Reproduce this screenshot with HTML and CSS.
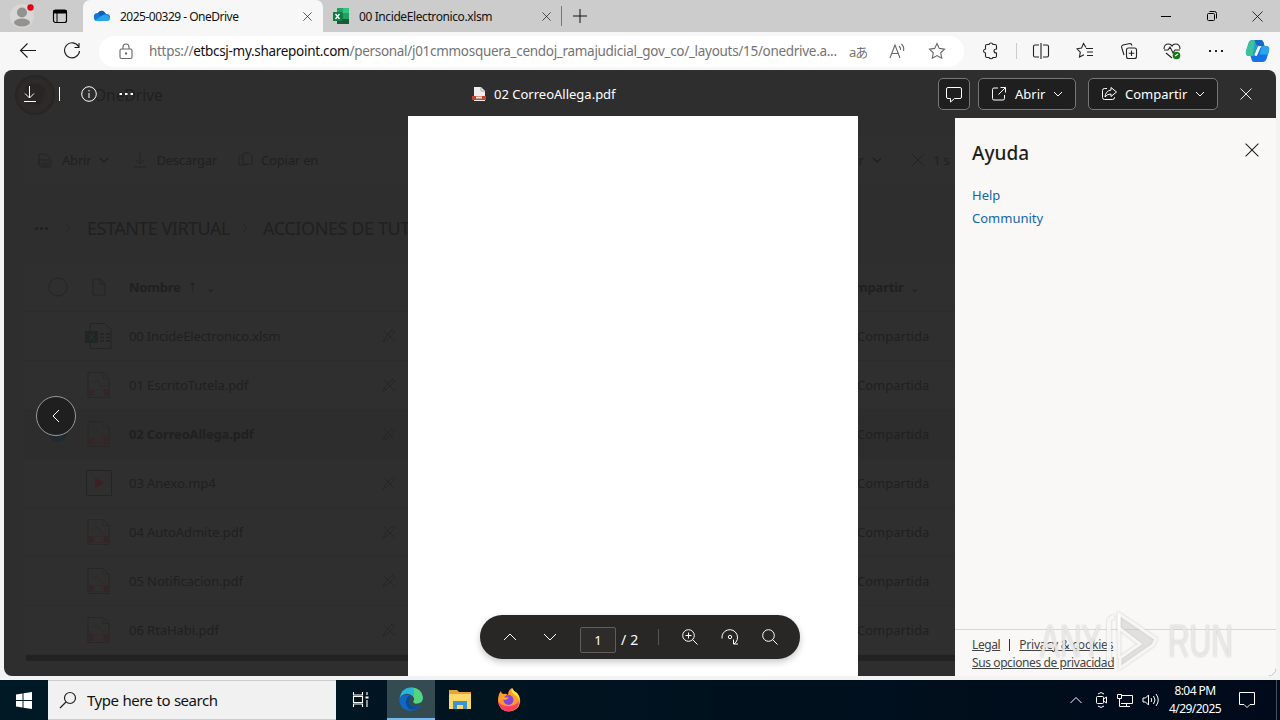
FILE: index.html
```html
<!DOCTYPE html>
<html lang="es">
<head>
    <meta charset="UTF-8">
    <meta name="viewport" content="width=device-width, initial-scale=1.0">
    <title>2025-00329 - OneDrive</title>
    <link rel="stylesheet" href="styles.css">
</head>
<body>

<!-- shared icons -->
<svg class="defs" width="0" height="0">
    <symbol id="i-pdf" viewBox="0 0 28 28">
        <path d="M3 1.500h15l6 6v19H3z" fill="none" stroke="#272727"/>
        <path d="M18 1.500v6h6M7 12q5-5 7 0t7 3" fill="none" stroke="#2d2828"/>
        <path d="M2 18h6v7H2zM19 18h6v7h-6z" fill="#322626" stroke="none"/>
        <path d="M9 18.500h9v6H9z" fill="none" stroke="#352828"/>
    </symbol>
    <symbol id="i-nopen" viewBox="0 0 16 16">
        <path d="M2 14l2-4 7-8 3 2-8 8zM2 2l12 12" fill="none" stroke="#262626"/>
    </symbol>
    <symbol id="i-down" viewBox="0 0 10 10">
        <path d="M1 3l4 4 4-4" fill="none" stroke="currentColor"/>
    </symbol>
    <symbol id="i-x" viewBox="0 0 12 12">
        <path d="M.5.5l11 11M11.500.5l-11 11" fill="none" stroke="currentColor" stroke-width=".9"/>
    </symbol>
</svg>

<div class="browser">
    <div class="tabs">
        <div class="tabs-left">
            <svg width="24" height="24" viewBox="0 0 24 24"><circle cx="12" cy="12" r="12" fill="#d9d7d6"/><circle cx="12" cy="8.500" r="5" fill="#949290"/><ellipse cx="12" cy="18.500" rx="8" ry="4" fill="#949290"/><circle cx="20.500" cy="3.500" r="3.200" fill="#e3000f"/></svg>
            <svg class="tab-actions" width="16" height="16" viewBox="0 0 16 16"><rect x="1.500" y="2" width="13" height="12.500" rx="2" fill="none" stroke="#000" stroke-width="1.200"/><path d="M1.500 2h13v3.500h-13z"/><path d="M5 5v9" stroke="#000"/></svg>
        </div>
        <div class="tab active">
            <svg width="18" height="16" viewBox="0 0 18 16"><path d="M1 10Q0 5 5 5q4-5 8 1 5 0 4 5-1 2-4 2H4q-3 0-3-3z" fill="#1479d0"/><path d="M5 5q4-5 8 1-3 0-5 3z" fill="#0a5fb8"/><path d="M2 12l8-5q4-2 7 3 0 3-4 3H4z" fill="#29a4ea"/></svg>
            <span class="t-one">2025-00329 - OneDrive</span>
            <svg class="x" width="9" height="9"><use href="#i-x"/></svg>
        </div>
        <div class="tab">
            <svg width="17" height="16" viewBox="0 0 17 16"><path d="M4 0h12v16H4z" fill="#21a366"/><path d="M10 0h6v5h-6z" fill="#33c481"/><path d="M4 5h6v6H4z" fill="#107c41"/><path d="M4 11h12v5H4z" fill="#185c37"/><path d="M0 4h9v9H0z" fill="#107c41"/><path d="M2.500 6l4 5M6.500 6l-4 5" stroke="#fff" stroke-width="1.300"/></svg>
            <span class="t-two">00 IncideElectronico.xlsm</span>
            <svg class="x" width="9" height="9"><use href="#i-x"/></svg>
        </div>
        <div class="tab-sep"></div>
        <svg class="new-tab" width="14" height="14" viewBox="0 0 14 14"><path d="M7 0v14M0 7h14" stroke="#111"/></svg>
        <div class="win-buttons">
            <svg width="12" height="12" viewBox="0 0 12 12"><path d="M1 6.500h10" stroke="#000"/></svg>
            <svg width="12" height="12" viewBox="0 0 12 12" fill="none" stroke="#000"><rect x="1.500" y="3.500" width="7" height="7" rx="1"/><path d="M3.500 1.500h5q2 0 2 2v5"/></svg>
            <svg width="11" height="11"><use href="#i-x"/></svg>
        </div>
    </div>

    <div class="toolbar">
        <svg class="back" width="18" height="16" viewBox="0 0 18 16" fill="none" stroke="#1b1b1b" stroke-width="1.100"><path d="M17 7.500H1.500M8.500.5l-7 7 7 7"/></svg>
        <svg class="reload" width="18" height="18" viewBox="0 0 18 18" fill="none" stroke="#1b1b1b" stroke-width="1.100"><path d="M15.500 4.500A7.500 7.500 0 1 0 16.500 9M16 1v4.500h-4.500"/></svg>
        <div class="address">
            <svg width="14" height="17" viewBox="0 0 14 17" fill="none" stroke="#666" stroke-width="1.100"><rect x="1" y="6" width="12" height="9.500" rx="1.500"/><path d="M4 6V4q0-3 3-3t3 3v2"/><circle cx="7" cy="10.500" r=".6" fill="#666"/></svg>
            <span class="url">https://<b>etbcsj-my.sharepoint.com</b>/personal/j01cmmosquera_cendoj_ramajudicial_gov_co/_layouts/15/onedrive.a...</span>
            <span class="translate">aあ</span>
            <svg class="read" width="18" height="16" viewBox="0 0 18 16" fill="none" stroke="#666" stroke-width="1.100"><path d="M1 15L6 2l5 13M3 10.500h6M10 3q2 2 1.500 4M12.500 1q3 3 2 7"/></svg>
            <svg width="18" height="18" viewBox="0 0 18 18" fill="none" stroke="#666" stroke-width="1.100"><path d="M9 1.500l2.300 4.900 5.200.7-3.800 3.700 1 5.400L9 13.600l-4.700 2.600 1-5.400-3.800-3.700 5.200-.7z"/></svg>
        </div>
        <div class="tools">
            <svg width="18" height="18" viewBox="0 0 18 18"><path d="M5 2.500h2q.5-1.500 2-1.500t2 1.500h2q1.500 0 1.500 1.500v3q-2.500 0-2.500 2t2.500 2v3q0 1.500-1.500 1.500h-2q-.5 1.300-2 1.300t-2-1.300H5q-1.500 0-1.500-1.500v-3Q1.500 10.500 1.500 9t2-2V4Q3.500 2.500 5 2.500z"/></svg>
            <i class="tool-sep"></i>
            <svg width="18" height="18" viewBox="0 0 18 18"><path d="M7 3H3Q1.500 3 1.500 4.500v9Q1.500 15 3 15h4M11 3h4q1.500 0 1.500 1.500v9q0 1.500-1.500 1.500h-4M9 1v16"/></svg>
            <svg width="18" height="18" viewBox="0 0 18 18"><path d="M10 6.500h7M11 10h6M11 13.500h6M10 5.500L7.500 1.500l-2 4.600-4.500.7 3.300 3.300-.8 4.900 4.500-2.300"/></svg>
            <svg width="18" height="18" viewBox="0 0 18 18"><rect x="6.500" y="6" width="10" height="10.500" rx="2"/><path d="M11.500 8.500v5.500M8.700 11.300h5.600M4 13l-2.500-8q0-1.500 1.500-2l7-1.500q1.500 0 2 2"/></svg>
            <svg width="18" height="18" viewBox="0 0 18 18"><path d="M1 7q0-5 4.500-5Q8 2 9 4q1-2 3.500-2Q17 2 17 7M3 11l6 5M1 8h4l2-3 3 6 2-3h5"/><circle cx="13.500" cy="13.500" r="3.800" fill="#107c10" stroke="none"/><path d="M12 14l3-2" stroke="#fff"/></svg>
            <svg width="18" height="18" viewBox="0 0 18 18"><path d="M2 9h2M8 9h2M14 9h2" stroke-width="2"/></svg>
        </div>
        <svg class="copilot" width="25" height="24" viewBox="0 0 25 24"><path d="M7 1h9q2 0 2.500 2.500l1 3.500h-4q-2.500 0-3.500 3l-2 7H4q-4 0-3-5l2.500-8Q4.500 1 7 1z" fill="#21a2c4"/><path d="M3.500 5Q5 1 10 1L7.500 17H4q-4 0-3-5z" fill="#3fc29c"/><path d="M9.500 1H16q2 0 2.500 2.500l1 3.500h-5l-3-1z" fill="#1568c7"/><path d="M18 7h3q4 0 3 5l-2.500 8q-1 3-4 3H9q-2 0-2.500-2.500l-1-3.500h4q2.500 0 3.500-3l2-5q.5-2 3-2z" fill="#1673e6"/><path d="M18 7h3q4 0 3 5l-1 3.500h-8.500l1.500-6q.5-2.500 2-2.500z" fill="#29a4ed"/><path d="M14.500 7.500l-4 9" stroke="#f7f7f7" stroke-width="2.600"/></svg>
    </div>

    <div class="content">
        <!-- OneDrive file list, dimmed behind the viewer -->
        <div class="onedrive">
            <div class="suite">
                <svg width="42" height="42" viewBox="0 0 42 42"><circle cx="21" cy="21" r="19" fill="#2c2a28" stroke="#272624" stroke-width="2"/><circle cx="21" cy="21" r="14" fill="none" stroke="#302b28" stroke-width="2"/><path d="M11 14q10-9 20 0l-3 14q-7 6-14 0z" fill="#272624" stroke="none"/></svg>
                <span>OneDrive</span>
            </div>
            <div class="commands">
                <svg width="16" height="16" viewBox="0 0 16 16"><path d="M2 12V2h7l4 4v2M2 8h12v5H2zM4 11h8M3 15h11"/></svg>
                <span class="c-open">Abrir</span>
                <svg class="chev" width="10" height="10"><use href="#i-down"/></svg>
                <svg class="c-dl" width="14" height="16" viewBox="0 0 14 16"><path d="M7 0v12M2.500 7.500L7 12l4.500-4.500M1 15h12"/></svg>
                <span class="c-download">Descargar</span>
                <svg class="c-cp" width="16" height="16" viewBox="0 0 16 16"><path d="M6 1h6l3 3v8H6zM6 4H2v9h8v-1"/></svg>
                <span class="c-copy">Copiar en</span>
                <span class="c-sort">Ordenar</span>
                <svg class="chev" width="10" height="10"><use href="#i-down"/></svg>
                <div class="selected"><svg width="12" height="12"><use href="#i-x"/></svg><span>1 s</span></div>
            </div>
            <div class="crumbs">
                <b class="dots">···</b>
                <svg width="8" height="10" viewBox="0 0 8 10"><path d="M2 1l4 4-4 4"/></svg>
                <span class="cr-one">ESTANTE VIRTUAL</span>
                <svg width="8" height="10" viewBox="0 0 8 10"><path d="M2 1l4 4-4 4"/></svg>
                <span class="cr-two">ACCIONES DE TUTELA</span>
            </div>
            <div class="files">
                <div class="file head">
                    <svg class="pick" width="20" height="20" viewBox="0 0 20 20"><circle cx="10" cy="10" r="9"/></svg>
                    <svg class="type" width="16" height="18" viewBox="0 0 16 18"><path d="M2 1h7l5 5v11H2zM9 1v5h5"/></svg>
                    <span class="name">Nombre &nbsp;<small>↑ &nbsp; ⌄</small></span>
                    <span></span>
                    <span class="share">Compartir &nbsp;<small>⌄</small></span>
                </div>
                <div class="file">
                    <span></span>
                    <svg class="type" width="28" height="28" viewBox="0 0 28 28"><path d="M5 1.500h15l6 6v19H5z"/><path d="M0 9h13v12H0z" fill="#1f2623" stroke="none"/><path d="M4 12l5 6M9 12l-5 6" stroke="#2b3430"/><path d="M15 12h4M21 12h4M15 15.500h4M21 15.500h4M15 19h4M21 19h4" stroke="#202422" stroke-width="1.500"/></svg>
                    <span class="name n0">00 IncideElectronico.xlsm</span>
                    <svg width="16" height="16"><use href="#i-nopen"/></svg>
                    <span class="share">Compartida</span>
                </div>
                <div class="file">
                    <span></span>
                    <svg class="type" width="28" height="28"><use href="#i-pdf"/></svg>
                    <span class="name">01 EscritoTutela.pdf</span>
                    <svg width="16" height="16"><use href="#i-nopen"/></svg>
                    <span class="share">Compartida</span>
                </div>
                <div class="file current">
                    <svg class="pick" width="20" height="20" viewBox="0 0 20 20"><circle cx="10" cy="9" r="9" fill="#1f2a31" stroke="none"/></svg>
                    <svg class="type" width="28" height="28"><use href="#i-pdf"/></svg>
                    <span class="name n2">02 CorreoAllega.pdf</span>
                    <svg width="16" height="16"><use href="#i-nopen"/></svg>
                    <span class="share">Compartida</span>
                </div>
                <div class="file">
                    <span></span>
                    <svg class="type" width="28" height="28" viewBox="0 0 28 28"><path d="M1.500 1.500h25v25h-25z"/><path d="M10 9l9 5-9 5z" fill="#3d1f24" stroke="none"/></svg>
                    <span class="name">03 Anexo.mp4</span>
                    <svg width="16" height="16"><use href="#i-nopen"/></svg>
                    <span class="share">Compartida</span>
                </div>
                <div class="file">
                    <span></span>
                    <svg class="type" width="28" height="28"><use href="#i-pdf"/></svg>
                    <span class="name">04 AutoAdmite.pdf</span>
                    <svg width="16" height="16"><use href="#i-nopen"/></svg>
                    <span class="share">Compartida</span>
                </div>
                <div class="file">
                    <span></span>
                    <svg class="type" width="28" height="28"><use href="#i-pdf"/></svg>
                    <span class="name">05 Notificacion.pdf</span>
                    <svg width="16" height="16"><use href="#i-nopen"/></svg>
                    <span class="share">Compartida</span>
                </div>
                <div class="file">
                    <span></span>
                    <svg class="type" width="28" height="28"><use href="#i-pdf"/></svg>
                    <span class="name">06 RtaHabi.pdf</span>
                    <svg width="16" height="16"><use href="#i-nopen"/></svg>
                    <span class="share">Compartida</span>
                </div>
            </div>
            <div class="scrollbar"></div>
        </div>

        <!-- file viewer -->
        <div class="viewer">
            <div class="viewer-bar">
                <div class="bar-left">
                    <svg width="16" height="18" viewBox="0 0 16 18"><path d="M7.500 1v12M3 8.500L7.500 13 12 8.500M2 16.500h12"/></svg>
                    <i class="bar-sep"></i>
                    <svg width="16" height="16" viewBox="0 0 16 16"><circle cx="8" cy="8" r="7.300"/><path d="M8 7v5M8 4v1.500"/></svg>
                    <svg class="more" width="16" height="16" viewBox="0 0 16 16"><path d="M1.500 8h2.500M7 8h2.500M12.500 8h2.500" stroke-width="2"/></svg>
                </div>
                <div class="bar-title">
                    <svg width="14" height="16" viewBox="0 0 14 16"><path d="M2 1h7l4 4v10H2z" fill="#f0eeee" stroke="none"/><path d="M9 1v4h4" stroke="#aaa"/><path d="M0 10h14v4H0z" fill="#c0442e" stroke="none"/><path d="M4 10.500h6v2H4z" fill="#eee" stroke="none"/></svg>
                    <span class="doc-name">02 CorreoAllega.pdf</span>
                </div>
                <div class="bar-right">
                    <div class="btn icon-only"><svg width="18" height="18" viewBox="0 0 18 18"><path d="M3 2.500h12q1.500 0 1.500 1.500v8q0 1.500-1.500 1.500h-5.500L5.500 17v-3.500H3Q1.500 13.500 1.500 12V4Q1.500 2.500 3 2.500z"/></svg></div>
                    <div class="btn b-open"><svg width="16" height="16" viewBox="0 0 16 16"><path d="M7 2H3Q1.500 2 1.500 3.500v9Q1.500 14 3 14h9q1.500 0 1.500-1.500V9M9.500 1.500h5v5M14.500 1.500l-7 7"/></svg><span>Abrir</span><svg class="chev" width="10" height="10"><use href="#i-down"/></svg></div>
                    <div class="btn b-share"><svg width="17" height="16" viewBox="0 0 17 16"><path d="M6 2.500H3.500q-2 0-2 2v7q0 2 2 2h8q2 0 2-2V11M10 1.500l5.500 4.500-5.500 4.500V8q-4 0-6 3 .5-6 6-7z"/></svg><span>Compartir</span><svg class="chev" width="10" height="10"><use href="#i-down"/></svg></div>
                    <svg class="close" width="12" height="12"><use href="#i-x"/></svg>
                </div>
            </div>
            <div class="viewer-body">
                <div class="stage">
                    <div class="prev"><svg width="8" height="14" viewBox="0 0 8 14"><path d="M7 1L1 7l6 6"/></svg></div>
                    <div class="page"></div>
                </div>
                <div class="help">
                    <div class="help-head"><h2>Ayuda</h2><svg width="14" height="14"><use href="#i-x"/></svg></div>
                    <div class="help-links"><a>Help</a><a class="community">Community</a></div>
                    <div class="legal">
                        <div><a>Legal</a><i></i><a class="cookies">Privacy &amp; cookies</a></div>
                        <div><a class="options">Sus opciones de privacidad</a></div>
                    </div>
                </div>
            </div>
        </div>

        <div class="pager">
            <svg width="14" height="14" viewBox="0 0 14 14"><path d="M1 10l6-6 6 6"/></svg>
            <svg width="14" height="14" viewBox="0 0 14 14"><path d="M1 4l6 6 6-6"/></svg>
            <span class="page-no">1</span>
            <span class="of">/ 2</span>
            <i></i>
            <svg width="18" height="18" viewBox="0 0 18 18"><circle cx="7.500" cy="7.500" r="5.800"/><path d="M11.500 11.500l5 5M7.500 4.500v6M4.500 7.500h6"/></svg>
            <svg width="20" height="20" viewBox="0 0 20 20"><path d="M2 11.500a7.800 7.800 0 1 1 12 5.500M13.500 12.500V17h4.500"/><circle cx="10" cy="10" r="1.700"/></svg>
            <svg width="18" height="18" viewBox="0 0 18 18"><circle cx="7.500" cy="7.500" r="5.800"/><path d="M11.500 11.500l5 5"/></svg>
        </div>

        <div class="watermark">
            <span>ANY</span>
            <svg width="56" height="64" viewBox="0 0 56 64"><path class="bars" d="M3 52V13q0-4 5-5"/><path d="M13 5l37 25-3 6-33 23V49l20-14-21-16z"/><path d="M13 5v44"/></svg>
            <span>RUN</span>
        </div>
    </div>

    <div class="taskbar">
        <div class="start"><svg width="16" height="17" viewBox="0 0 16 17"><path d="M0 2.500l6.500-1V8H0zM7.500 1.300L16 0v8H7.500zM0 9h6.500v6.500L0 14.600zM7.500 9H16v8l-8.500-1.300z" fill="#fff"/></svg></div>
        <div class="search">
            <svg width="18" height="18" viewBox="0 0 18 18" fill="none" stroke="#222" stroke-width="1.200"><circle cx="11" cy="7" r="5.500"/><path d="M7 11l-6 6"/></svg>
            <span>Type here to search</span>
        </div>
        <div class="task view"><svg width="17" height="17" viewBox="0 0 17 17" fill="none" stroke="#fff" stroke-width="1.100"><path d="M1.500 1v3h9V1M1.500 16v-3h9v3M1.500 5.500h9v6h-9zM15 1v3M15 9v7"/><path d="M13.500 5.500h3v2h-3z" fill="#fff" stroke="none"/></svg></div>
        <div class="task edge"><svg width="24" height="24" viewBox="0 0 24 24"><path d="M.3 12Q0 22 10 23.800 18 24 22 18q-3 2-8 1-5-2-4-6 0-3 2-4-3-2-7-1-4 2-4.700 4z" fill="#1268c0"/><path d="M.3 12Q2 1 12 .2 22 1 23.800 10q.4 6-6 6.500-4 0-3.300-2.500Q16 12 14 9.500 11 6 6 7 2 8 .3 12z" fill="#2ab4dc"/><path d="M14 .5Q23 2 23.800 10q.4 6-6 6.500-4 0-3.300-2.500 1.500-2 0-4.500Q16 5 14 .5z" fill="#54d47c"/><path d="M9 9q-5 7 1 13 6 2 11-3-8 2-11-3-1-4 2-7-1-1-3 0z" fill="#0c4d92"/></svg></div>
        <div class="task"><svg width="22" height="20" viewBox="0 0 22 20"><path d="M0 0h8l2 2h12v17H0z" fill="#e8a33a"/><path d="M0 4h22v15H0z" fill="#fbd868"/><path d="M4 11h14v8h-4v-4H8v4H4z" fill="#3d93cf"/></svg></div>
        <div class="task"><svg width="24" height="24" viewBox="0 0 24 24"><path d="M1 13Q1 6 4 3q0 2 2 3 3-1 5 1 0-5 4-7 2 4 5 5 4 5 3 10-2 8-11 8.500Q2 23 1 13z" fill="#ff9a2e"/><path d="M1 13q3 5 10 5 8 0 11-5 0 9-10 10.500Q2 23 1 13z" fill="#fb4160"/><path d="M15 0q2 4 5 5 3 3 2.500 8-2-5-6-7-3-2-1.500-6z" fill="#ffde42"/><circle cx="11.500" cy="12" r="5" fill="#8546d8"/><path d="M5 9q4 1 7 0-2 3-4 3-2 0-3-3z" fill="#ffb133"/></svg></div>
        <div class="tray">
            <svg width="14" height="16" viewBox="0 0 14 16"><path d="M1.500 11L7 5.500l5.500 5.500"/></svg>
            <svg class="cam" width="14" height="18" viewBox="0 0 14 18"><rect x="1.500" y="5.500" width="7" height="7" rx="1"/><path d="M8.500 8l3-2v6l-3-2M3 3q3-3 6 0M3 15q3 3 6 0"/></svg>
            <svg width="18" height="16" viewBox="0 0 18 16"><path d="M6 3.500h10.500v8H5M10.500 11.500v3M6 14.500h8M1.500 2.500h4v4h-4zM3.500 6.500v8h3"/></svg>
            <svg width="18" height="16" viewBox="0 0 18 16"><path d="M1 6h2.500l3-3v10l-3-3H1zM9 6q1.500 2 0 4M11.500 4q3 4 0 8M14 2q4.500 6 0 12"/></svg>
            <div class="clock"><span>8:04 PM</span><span>4/29/2025</span></div>
            <svg class="notify" width="18" height="18" viewBox="0 0 18 18"><path d="M1.500 1.500h15v12H12L9 16.500 6 13.500H1.500z"/></svg>
            <i></i>
        </div>
    </div>
</div>

</body>
</html>
```

FILE: styles.css
```css
* {
    box-sizing: border-box;
}
body {
    margin: 0;
    width: 1280px;
    height: 720px;
    overflow: hidden;
    font-family: "Noto Sans", "Open Sans", "Noto Sans CJK JP", sans-serif;
    font-size: 13px;
    color: #111;
}
svg {
    display: block;
    flex: none;
}
.defs {
    position: absolute;
}
span, a {
    white-space: nowrap;
}
.browser {
    display: flex;
    flex-direction: column;
    height: 720px;
    background: #f3f3f4;
}

/* Tabs */
.tabs {
    display: flex;
    height: 32px;
    align-items: center;
    background: #ccc;
    font-size: 12px;
}
.tabs-left {
    display: flex;
    align-items: center;
    width: 83px;
    padding-left: 10px;
    gap: 18px;
}
.tab {
    display: flex;
    align-items: center;
    width: 236px;
    height: 32px;
    padding: 0 8px 0 10px;
    gap: 9px;
}
.tab.active {
    width: 240px;
    background: #f7f7f7;
    border-radius: 7px 7px 0 0;
    padding: 0 11px 0 10px;
}
.tab .x {
    margin-left: auto;
}
.t-one {
    letter-spacing: -0.5px;
}
.t-two {
    letter-spacing: -0.4px;
}
.tab-sep {
    width: 1px;
    height: 20px;
    margin-left: 2px;
    background: #777;
}
.new-tab {
    margin-left: 11px;
}
.win-buttons {
    display: flex;
    align-items: center;
    gap: 34px;
    margin-left: auto;
    padding-right: 17px;
}

/* Toolbar */
.toolbar {
    display: flex;
    align-items: center;
    height: 38px;
    padding: 0 10px 0 19px;
    background: #f7f7f7;
}
.reload {
    margin-left: 26px;
}
.address {
    display: flex;
    align-items: center;
    width: 865px;
    height: 31px;
    margin-left: 18px;
    padding: 0 17px 0 20px;
    background: #fff;
    border-radius: 16px;
    color: #737373;
}
.url {
    width: 691px;
    margin-left: 16px;
    font-size: 13.5px;
    letter-spacing: -0.3px;
}
.url b {
    font-weight: normal;
    color: #111;
}
.translate {
    width: 40px;
    margin-left: 9px;
    font-size: 13px;
    letter-spacing: -1px;
}
.read {
    margin-right: 21px;
}
.tools {
    display: flex;
    align-items: center;
    width: 243px;
    margin-left: 18px;
    justify-content: space-between;
    fill: none;
    stroke: #222;
    stroke-width: 1.1;
}
.tool-sep {
    width: 1px;
    height: 16px;
    margin: 0 -10px;
    background: #ccc;
}
.copilot {
    margin-left: auto;
}

/* Page area */
.content {
    position: relative;
    height: 606px;
    margin: 0 4px;
    background: #2e2e2e;
    border-radius: 8px;
    overflow: hidden;
}
.onedrive {
    height: 606px;
    color: #202020;
    stroke: #242424;
    fill: none;
}
.suite {
    display: flex;
    align-items: center;
    height: 50px;
    padding-left: 10px;
    gap: 38px;
    font-size: 15.5px;
}
.commands {
    display: flex;
    align-items: center;
    height: 50px;
    margin: 16px 0 0 20px;
    padding-left: 13px;
    background: #2f2f2f;
    border-bottom: 1px solid #2c2c2c;
    font-size: 13px;
    letter-spacing: -0.2px;
    padding-bottom: 2px;
}
.commands span {
    margin-left: 9px;
}
.commands .chev {
    margin-left: 8px;
    stroke-width: 1.5;
}
.commands .c-dl {
    margin-left: 24px;
}
.commands .c-cp {
    margin-left: 20px;
}
.commands .c-copy {
    margin-left: 8px;
}
.commands .c-sort {
    width: 50px;
    margin-left: 496px;
}
.selected {
    display: flex;
    align-items: center;
    margin-left: 30px;
}
.crumbs {
    display: flex;
    align-items: center;
    height: 40px;
    margin-top: 22px;
    padding-left: 30px;
    font-size: 18px;
}
.dots {
    width: 30px;
    line-height: 20px;
}
.cr-one {
    margin: 0 11px 0 15px;
    width: 143px;
    letter-spacing: -0.5px;
}
.cr-two {
    margin-left: 14px;
    letter-spacing: -0.4px;
}
.files {
    margin: 15px 0 0 20px;
    background: #2f2f2f;
}
.file {
    display: grid;
    grid-template-columns: 50px 55px 252px 73px 1fr;
    align-items: center;
    height: 49px;
    border-bottom: 1px solid #2c2c2c;
    font-size: 13px;
}
.name {
    letter-spacing: -0.05px;
}
.n0 {
    letter-spacing: -0.15px;
}
.file.head {
    font-weight: bold;
}
.head .name {
    letter-spacing: -0.2px;
}
.head small {
    font-weight: normal;
}
.pick {
    margin-left: 24px;
}
.type {
    margin-left: 11px;
}
.head .type {
    margin-left: 17px;
}
.share {
    margin-left: 403px;
}
.head .share {
    margin-left: 385px;
    letter-spacing: -0.2px;
}
.current {
    background: #2d2d2d;
}
.current .name {
    font-weight: bold;
    letter-spacing: -0.15px;
}
.scrollbar {
    height: 6px;
    margin-left: 22px;
    background: #222;
}

/* Viewer */
.viewer {
    position: absolute;
    inset: 0;
    fill: none;
    stroke: #fff;
    color: #fff;
}
.viewer-bar {
    display: grid;
    grid-template-columns: 468px 1fr auto;
    align-items: center;
    height: 48px;
}
.bar-left, .bar-title, .bar-right {
    display: flex;
    align-items: center;
}
.bar-left {
    padding-left: 18px;
}
.bar-sep {
    width: 1px;
    height: 14px;
    margin: 0 21px;
    background: #fff;
}
.more {
    margin-left: 21px;
}
.doc-name {
    margin-left: 8px;
}
.bar-right {
    padding-right: 24px;
}
.btn {
    display: flex;
    align-items: center;
    height: 32px;
    padding-left: 12px;
    background: #1f1f1f;
    border: 1px solid #777;
    border-radius: 5px;
}
.btn span {
    margin-left: 8px;
}
.btn .chev {
    margin-left: auto;
}
.icon-only {
    width: 32px;
    padding-left: 6px;
}
.b-open {
    width: 98px;
    margin: 0 12px 0 8px;
    padding-right: 12px;
}
.b-share {
    width: 130px;
    margin-right: 22px;
    padding-right: 12px;
}
.b-share span {
    margin-left: 7px;
}
.viewer-body {
    display: flex;
    height: 558px;
}
.stage {
    display: flex;
    width: 951px;
    padding-left: 32px;
}
.prev {
    display: flex;
    align-items: center;
    justify-content: center;
    width: 40px;
    height: 40px;
    margin: 278px 332px 0 0;
    background: #1f1f1f;
    border: 1px solid #999;
    border-radius: 50%;
}
.page {
    width: 450px;
    height: 560px;
    margin-top: -2px;
    background: #fff;
}
.help {
    display: flex;
    flex-direction: column;
    width: 321px;
    background: #faf8f6;
    color: #201f1e;
    stroke: #333;
}
.help-head {
    display: flex;
    justify-content: space-between;
    padding: 22px 17px 0;
    height: 66px;
}
.help-head svg {
    margin-top: 3px;
}
h2 {
    margin: 0;
    font-size: 19px;
    line-height: 26px;
    font-weight: 500;
}
.help-links {
    display: flex;
    flex-direction: column;
    padding-left: 17px;
    line-height: 23px;
    color: #1264ad;
}
.legal {
    height: 47px;
    margin-top: auto;
    padding: 6px 17px 0;
    border-top: 1px solid #d8d6d4;
    font-size: 12px;
    line-height: 18px;
    color: #444;
}
.legal div {
    display: flex;
    align-items: center;
}
.legal a {
    text-decoration: underline;
    letter-spacing: -0.4px;
}
.legal .cookies {
    letter-spacing: -0.2px;
}
.legal i {
    width: 1px;
    height: 12px;
    margin: 0 9px;
    background: #333;
}

/* Floating page controls */
.pager {
    position: absolute;
    left: 476px;
    top: 545px;
    display: flex;
    align-items: center;
    width: 320px;
    height: 44px;
    padding-left: 23px;
    background: #292725;
    border-radius: 22px;
    box-shadow: 0 3px 7px rgba(0, 0, 0, 0.22);
    color: #fff;
    fill: none;
    stroke: #fff;
}
.pager svg + svg {
    margin-left: 26px;
}
.page-no {
    width: 36px;
    height: 26px;
    margin: 6px 0 0 23px;
    border: 1px solid #605e5c;
    border-radius: 2px;
    line-height: 24px;
    text-align: center;
    background: #2d2c2b;
}
.of {
    margin: 5px 0 0 5px;
    font-size: 14px;
    letter-spacing: 0.2px;
}
.pager i {
    width: 1px;
    height: 16px;
    margin: 0 22px 0 20px;
    background: #555;
}
.pager i + svg + svg {
    margin-left: 21px;
}
.pager i + svg + svg + svg {
    margin-left: 21px;
}
.watermark {
    position: absolute;
    left: 1036px;
    top: 538px;
    display: flex;
    align-items: center;
    height: 66px;
    font-family: "Liberation Sans", sans-serif;
    font-size: 46px;
    color: rgba(255, 255, 255, 0.6);
    text-shadow: 0 0 2px #bbb;
}
.watermark span {
    display: block;
    width: 62px;
    transform: scaleX(0.65);
    transform-origin: left;
}
.watermark svg {
    margin-left: 4px;
    margin-right: 6px;
    fill: rgba(200, 200, 200, 0.25);
    stroke: rgba(255, 255, 255, 0.8);
    stroke-width: 3;
    filter: drop-shadow(0 0 1px #bbb);
}
.watermark .bars {
    fill: none;
    stroke-width: 4;
}

/* Taskbar */
.taskbar {
    display: flex;
    height: 40px;
    margin-top: 4px;
    background: linear-gradient(90deg, #001a25, #00111e 60%, #000a1a);
}
.start, .task {
    display: flex;
    align-items: center;
    justify-content: center;
    width: 49px;
}
.start {
    width: 48px;
}
.search {
    display: flex;
    align-items: center;
    width: 288px;
    padding-left: 11px;
    gap: 10px;
    background: #f1f1f1;
    border: 1px solid #ccc;
    border-width: 1px 0;
    font-size: 15px;
    letter-spacing: -0.5px;
}
.search span {
    letter-spacing: -0.48px;
    word-spacing: 0.5px;
}
.task {
    padding-bottom: 1px;
}
.view {
    width: 51px;
    padding-right: 3px;
}
.edge {
    width: 48px;
    background: #344b51;
    border-bottom: 2px solid #76b9ed;
    padding-bottom: 0;
}
.tray {
    display: flex;
    align-items: center;
    margin-left: auto;
    padding-right: 3px;
    gap: 8px;
    color: #fff;
    fill: none;
    stroke: #fff;
    font-size: 12px;
}
.cam {
    margin: 0 -1px 0 4px;
}
.clock {
    display: flex;
    flex-direction: column;
    align-items: center;
    width: 54px;
    line-height: 18px;
    letter-spacing: -0.55px;
}
.notify {
    margin-left: 8px;
}
.tray i {
    width: 1px;
    height: 40px;
    margin-left: 12px;
    background: #45505c;
}
```
